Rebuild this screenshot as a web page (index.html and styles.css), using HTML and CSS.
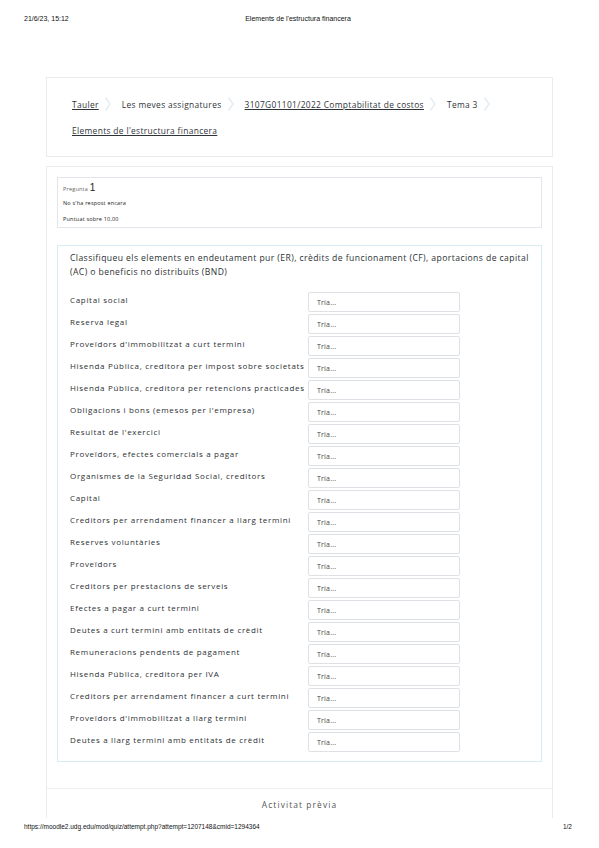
FILE: index.html
```html
<!DOCTYPE html>
<html lang="ca">
<head>
<meta charset="utf-8">
<title>Elements de l'estructura financera</title>
<link rel="stylesheet" href="styles.css">
</head>
<body>
<div class="print-head">
  <span class="ph-date">21/6/23, 15:12</span>
  <span class="ph-title">Elements de l'estructura financera</span>
  <span></span>
</div>
<div class="sheet">
  <main class="main">
    <nav class="card crumbs">
      <div class="crumb-line">
        <a class="crumb link" href="#">Tauler</a>
        <svg class="chev" viewBox="0 0 6 14"><path d="M0.5 0.5 L5 7 L0.5 13.5" /></svg>
        <span class="crumb">Les meves assignatures</span>
        <svg class="chev" viewBox="0 0 6 14"><path d="M0.5 0.5 L5 7 L0.5 13.5" /></svg>
        <a class="crumb link" href="#">3107G01101/2022 Comptabilitat de costos</a>
        <svg class="chev" viewBox="0 0 6 14"><path d="M0.5 0.5 L5 7 L0.5 13.5" /></svg>
        <span class="crumb">Tema 3</span>
        <svg class="chev" viewBox="0 0 6 14"><path d="M0.5 0.5 L5 7 L0.5 13.5" /></svg>
      </div>
      <div class="crumb-line">
        <a class="crumb link" href="#">Elements de l'estructura financera</a>
      </div>
    </nav>

    <section class="card quiz">
      <div class="quiz-body">
        <div class="info">
          <div class="info-no">Pregunta <span class="qno">1</span></div>
          <div class="info-state">No s'ha respost encara</div>
          <div class="info-grade">Puntuat sobre 10,00</div>
        </div>
        <div class="qtext-box">
          <p class="qtext">Classifiqueu els elements en endeutament pur (ER), crèdits de funcionament (CF), aportacions de capital (AC) o beneficis no distribuïts (BND)</p>
          <div class="answers">
            <div class="row"><span class="lbl">Capital social</span><span class="sel">Tria...</span></div>
            <div class="row"><span class="lbl">Reserva legal</span><span class="sel">Tria...</span></div>
            <div class="row"><span class="lbl">Proveïdors d'immobilitzat a curt termini</span><span class="sel">Tria...</span></div>
            <div class="row"><span class="lbl">Hisenda Pública, creditora per impost sobre societats</span><span class="sel">Tria...</span></div>
            <div class="row"><span class="lbl">Hisenda Pública, creditora per retencions practicades</span><span class="sel">Tria...</span></div>
            <div class="row"><span class="lbl">Obligacions i bons (emesos per l'empresa)</span><span class="sel">Tria...</span></div>
            <div class="row"><span class="lbl">Resultat de l'exercici</span><span class="sel">Tria...</span></div>
            <div class="row"><span class="lbl">Proveïdors, efectes comercials a pagar</span><span class="sel">Tria...</span></div>
            <div class="row"><span class="lbl">Organismes de la Seguridad Social, creditors</span><span class="sel">Tria...</span></div>
            <div class="row"><span class="lbl">Capital</span><span class="sel">Tria...</span></div>
            <div class="row"><span class="lbl">Creditors per arrendament financer a llarg termini</span><span class="sel">Tria...</span></div>
            <div class="row"><span class="lbl">Reserves voluntàries</span><span class="sel">Tria...</span></div>
            <div class="row"><span class="lbl">Proveïdors</span><span class="sel">Tria...</span></div>
            <div class="row"><span class="lbl">Creditors per prestacions de serveis</span><span class="sel">Tria...</span></div>
            <div class="row"><span class="lbl">Efectes a pagar a curt termini</span><span class="sel">Tria...</span></div>
            <div class="row"><span class="lbl">Deutes a curt termini amb entitats de crèdit</span><span class="sel">Tria...</span></div>
            <div class="row"><span class="lbl">Remuneracions pendents de pagament</span><span class="sel">Tria...</span></div>
            <div class="row"><span class="lbl">Hisenda Pública, creditora per IVA</span><span class="sel">Tria...</span></div>
            <div class="row"><span class="lbl">Creditors per arrendament financer a curt termini</span><span class="sel">Tria...</span></div>
            <div class="row"><span class="lbl">Proveïdors d'immobilitzat a llarg termini</span><span class="sel">Tria...</span></div>
            <div class="row"><span class="lbl">Deutes a llarg termini amb entitats de crèdit</span><span class="sel">Tria...</span></div>
          </div>
        </div>
      </div>
      <div class="prev">Activitat prèvia</div>
    </section>
  </main>
</div>
<div class="print-foot">
  <span>https://moodle2.udg.edu/mod/quiz/attempt.php?attempt=1207148&amp;cmid=1294364</span>
  <span>1/2</span>
</div>
</body>
</html>
```
FILE: styles.css
```css
html, body {
  margin: 0;
  padding: 0;
  background: #fff;
}
body {
  width: 599px;
  height: 848px;
  overflow: hidden;
  font-family: "Open Sans", "Liberation Sans", sans-serif;
  color: #343a40;
}
.print-head {
  display: grid;
  grid-template-columns: 1fr auto 1fr;
  padding: 14px 24px 0;
  height: 26px;
  box-sizing: border-box;
  font-family: "Liberation Sans", Arial, sans-serif;
  font-size: 7px;
  line-height: 10px;
  color: #111;
}
.ph-title {
  margin-left: -3px;
}
.sheet {
  height: 792px;
  overflow: hidden;
}
.main {
  margin: 51px 46px 0;
  display: flex;
  flex-direction: column;
  gap: 9px;
}
.card {
  border: 1px solid #e9ebee;
  background: #fff;
}
.crumbs {
  height: 80px;
  box-sizing: border-box;
  padding: 13px 25px 0;
}
.crumb-line {
  display: flex;
  align-items: center;
  height: 26px;
  font-size: 8.4px;
  letter-spacing: 0.35px;
  color: #2f343a;
}
.crumb {
  white-space: nowrap;
}
.link {
  color: #2f343a;
  text-decoration: underline;
  text-underline-offset: 1px;
}
.chev {
  width: 6px;
  height: 14px;
  margin: 0 11px 0 6px;
}
.chev path {
  fill: none;
  stroke: #e6eef3;
  stroke-width: 1.6;
}
.quiz {
  height: 700px;
  box-sizing: border-box;
}
.quiz-body {
  padding: 10px 10px 26px;
  display: flex;
  flex-direction: column;
  gap: 17px;
  border-bottom: 1px solid #eceef0;
}
.info {
  border: 1px solid #e2e5ea;
  padding: 3px 5px 4px;
  height: 51px;
  box-sizing: border-box;
}
.info-no {
  font-size: 5.5px;
  line-height: 14px;
  color: #666;
  letter-spacing: 0.2px;
}
.qno {
  font-family: "Liberation Sans", Arial, sans-serif;
  font-size: 10px;
  color: #222;
}
.info-state, .info-grade {
  font-size: 5.5px;
  line-height: 8px;
  color: #222;
  letter-spacing: 0.2px;
}
.info-state {
  margin-top: 3px;
}
.info-grade {
  margin-top: 8px;
}
.qtext-box {
  border: 1px solid #d7edf4;
  padding: 5px 12px 9px;
}
.qtext {
  margin: 0 0 13px;
  font-size: 8.6px;
  letter-spacing: 0.42px;
  line-height: 14px;
  color: #2b2f33;
}
.answers {
  display: flex;
  flex-direction: column;
  gap: 2px;
}
.row {
  display: grid;
  grid-template-columns: 238px 152px;
  height: 20px;
}
.lbl {
  font-size: 8px;
  letter-spacing: 0.68px;
  line-height: 12px;
  padding-top: 2px;
  color: #2b2f33;
  white-space: nowrap;
}
.sel {
  border: 1px solid #dde1e6;
  border-radius: 2px;
  box-sizing: border-box;
  height: 20px;
  padding: 4px 8px 0;
  font-size: 7px;
  letter-spacing: 0.2px;
  line-height: 12px;
  color: #444;
}
.prev {
  text-align: center;
  padding-top: 10px;
  font-size: 8.4px;
  letter-spacing: 1.1px;
  color: #555;
}
.print-foot {
  display: flex;
  justify-content: space-between;
  padding: 4px 27px 0 24px;
  font-family: "Liberation Sans", Arial, sans-serif;
  font-size: 6.5px;
  line-height: 10px;
  color: #111;
}
```
